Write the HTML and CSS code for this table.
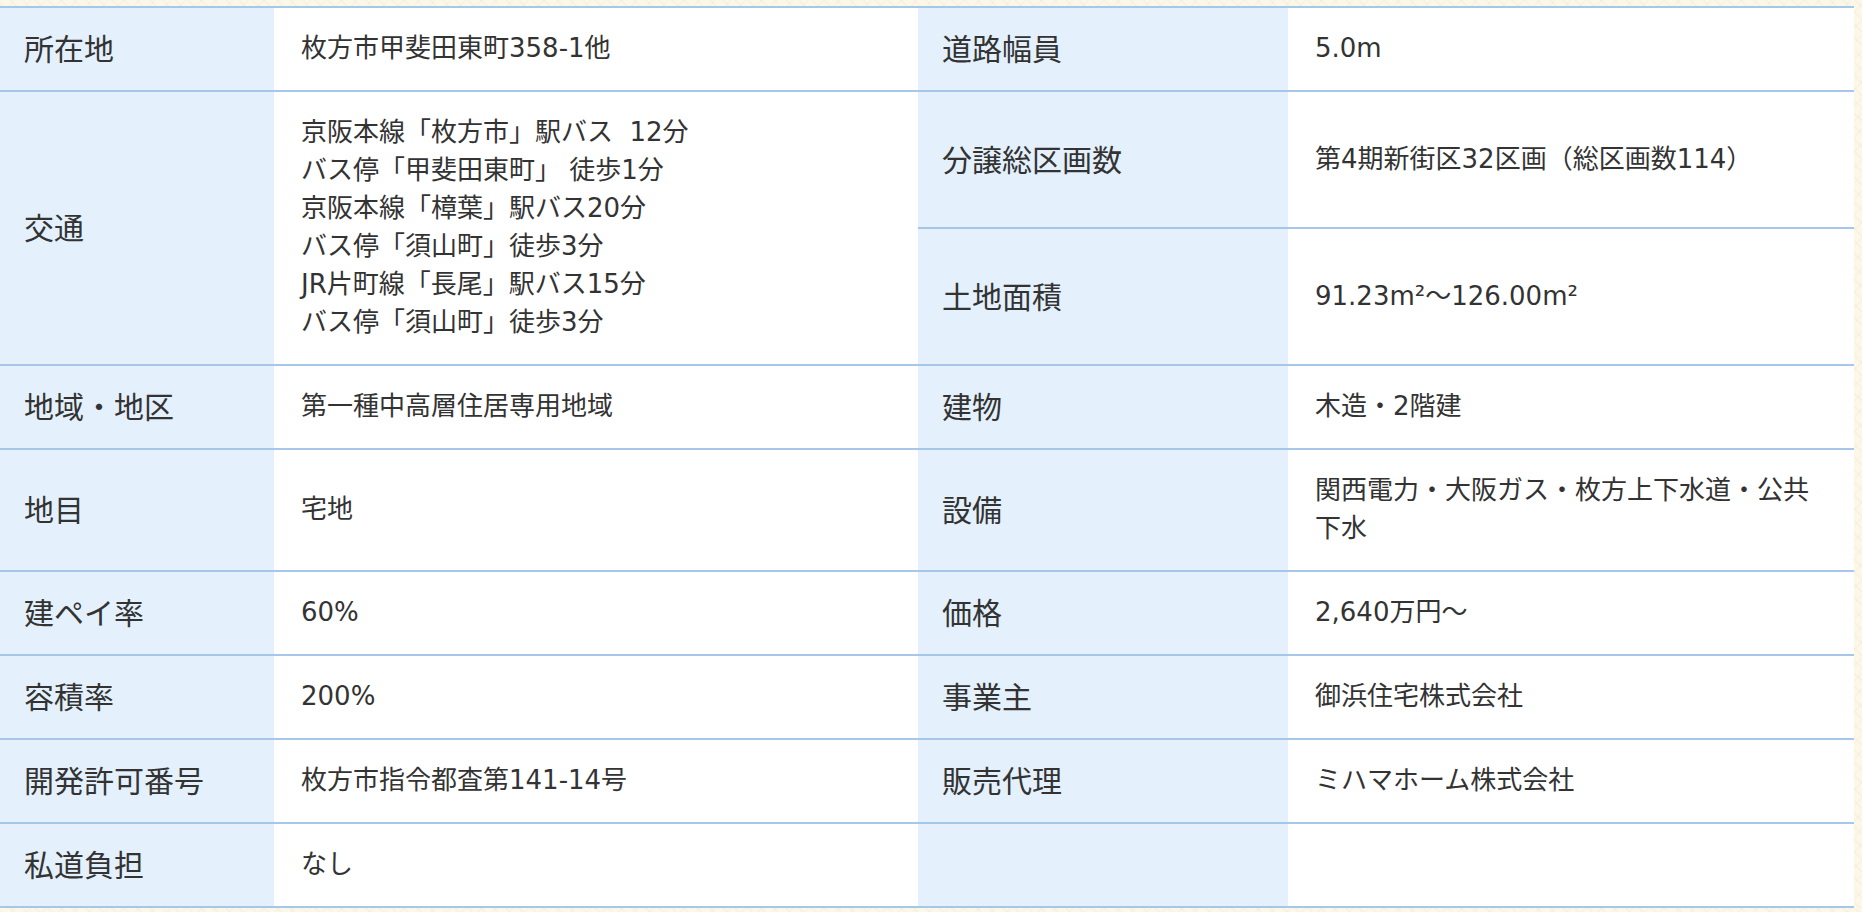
FILE: index.html
```html
<!DOCTYPE html>
<html lang="ja">
<head>
<meta charset="utf-8">
<title>物件概要</title>
<link rel="stylesheet" href="styles.css">
</head>
<body>
<div class="page">
<table class="spec">
  <colgroup>
    <col class="col-label1">
    <col class="col-value1">
    <col class="col-label2">
    <col class="col-value2">
  </colgroup>
  <tbody>
    <tr>
      <th>所在地</th>
      <td>枚方市甲斐田東町358-1他</td>
      <th>道路幅員</th>
      <td>5.0m</td>
    </tr>
    <tr>
      <th rowspan="2">交通</th>
      <td rowspan="2">京阪本線「枚方市」駅バス&nbsp; 12分<br>バス停「甲斐田東町」 徒歩1分<br>京阪本線「樟葉」駅バス20分<br>バス停「須山町」徒歩3分<br>JR片町線「長尾」駅バス15分<br>バス停「須山町」徒歩3分</td>
      <th>分譲総区画数</th>
      <td>第4期新街区32区画（総区画数114）</td>
    </tr>
    <tr>
      <th>土地面積</th>
      <td>91.23m²〜126.00m²</td>
    </tr>
    <tr>
      <th>地域・地区</th>
      <td>第一種中高層住居専用地域</td>
      <th>建物</th>
      <td>木造・2階建</td>
    </tr>
    <tr>
      <th>地目</th>
      <td>宅地</td>
      <th>設備</th>
      <td>関西電力・大阪ガス・枚方上下水道・公共下水</td>
    </tr>
    <tr>
      <th>建ペイ率</th>
      <td>60%</td>
      <th>価格</th>
      <td>2,640万円〜</td>
    </tr>
    <tr>
      <th>容積率</th>
      <td>200%</td>
      <th>事業主</th>
      <td>御浜住宅株式会社</td>
    </tr>
    <tr>
      <th>開発許可番号</th>
      <td>枚方市指令都査第141-14号</td>
      <th>販売代理</th>
      <td>ミハマホーム株式会社</td>
    </tr>
    <tr>
      <th>私道負担</th>
      <td>なし</td>
      <th></th>
      <td></td>
    </tr>
  </tbody>
</table>
</div>
</body>
</html>
```
FILE: styles.css
```css
html, body {
  margin: 0;
  padding: 0;
}

body {
  background-color: #fbf8ea;
  background-image:
    repeating-linear-gradient(45deg, rgba(230, 220, 190, 0.18) 0 2px, transparent 2px 9px),
    repeating-linear-gradient(-45deg, rgba(230, 220, 190, 0.14) 0 2px, transparent 2px 11px);
  font-family: "Noto Sans CJK JP", sans-serif;
  color: #333333;
}

.page {
  padding-top: 6px;
  width: 1854px;
}

.spec {
  width: 1854px;
  table-layout: fixed;
  border-collapse: collapse;
  background: #ffffff;
}

.col-label1 { width: 274px; }
.col-value1 { width: 644px; }
.col-label2 { width: 370px; }
.col-value2 { width: 566px; }

.spec th,
.spec td {
  border-top: 2px solid #a6c7e8;
  border-bottom: 2px solid #a6c7e8;
  vertical-align: middle;
  text-align: left;
  line-height: 38px;
  padding: 21px 27px 23px;
}

.spec th {
  background: #e4f1fd;
  font-weight: normal;
  font-size: 30px;
  padding: 20px 20px 24px 24px;
  color: #333333;
}

.spec td {
  background: #ffffff;
  font-family: "DejaVu Sans", "Noto Sans CJK JP", sans-serif;
  font-size: 26px;
  color: #333333;
}
```
